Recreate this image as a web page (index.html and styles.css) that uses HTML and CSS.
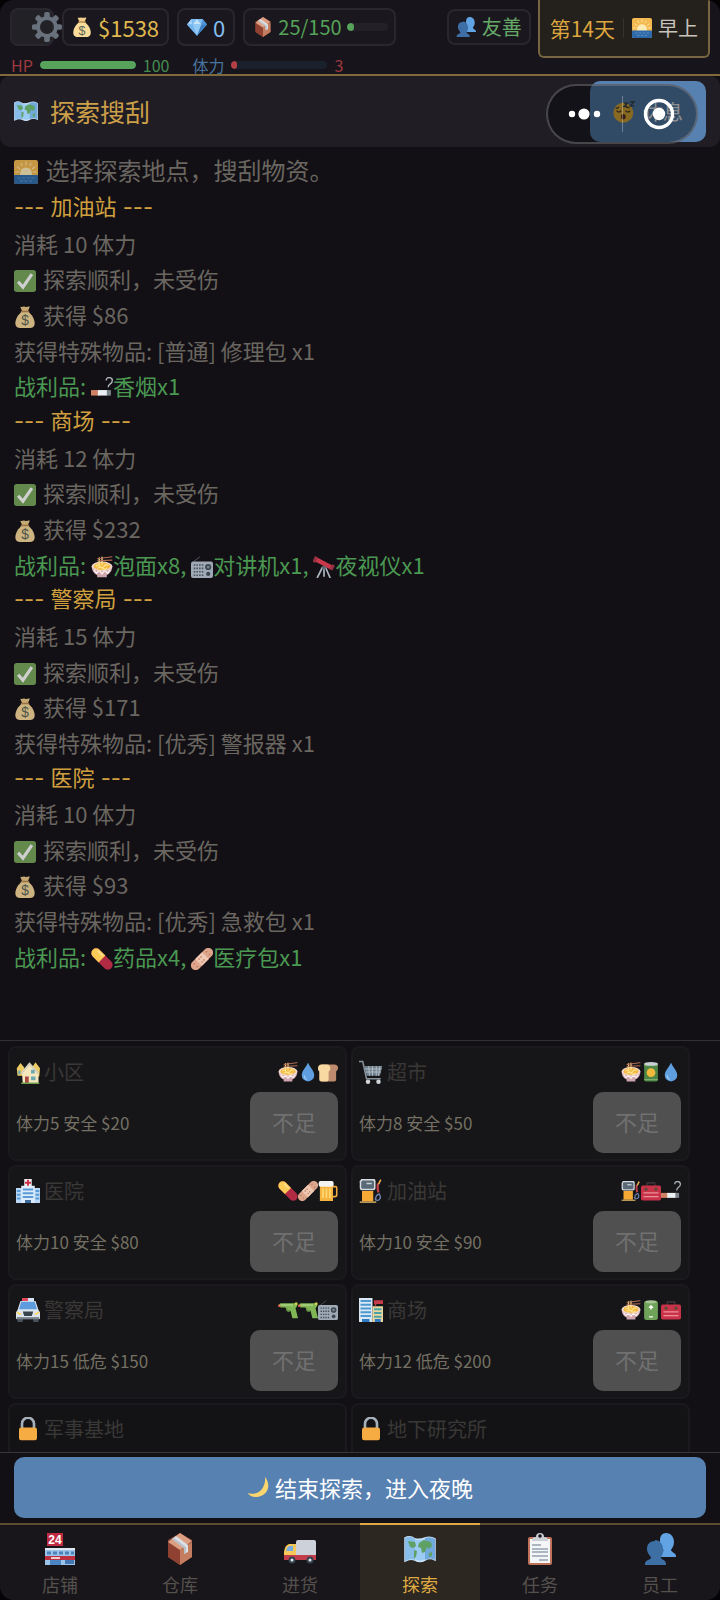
FILE: index.html
```html
<!DOCTYPE html>
<html lang="zh-CN">
<head>
    <meta charset="UTF-8">
    <meta name="viewport" content="width=device-width, initial-scale=1.0">
    <title>探索搜刮</title>
    <link rel="stylesheet" href="styles.css">
</head>
<body>

    <!-- 图标库 -->
    <svg class="sprite" aria-hidden="true">
        <symbol id="gear" viewBox="0 0 32 32">
            <g fill="#68717c">
                <g id="teeth"><rect x="13" y="0" width="6" height="7" rx="2"/><rect x="13" y="25" width="6" height="7" rx="2"/><rect x="0" y="13" width="7" height="6" rx="2"/><rect x="25" y="13" width="7" height="6" rx="2"/></g>
                <use href="#teeth" transform="rotate(45 16 16)"/>
            </g>
            <circle cx="16" cy="16" r="9.5" fill="none" stroke="#68717c" stroke-width="4"/>
        </symbol>
        <symbol id="money" viewBox="0 0 32 32">
            <path d="M9 1c3 1 4-1 7 0s4-1 7 0l-3 7h-8z" fill="#f3cf8b"/>
            <path d="M12 8h8c6 4 10 11 10 17 0 5-3 7-8 7H10c-5 0-8-2-8-7C2 19 6 12 12 8z" fill="#fbdc9a"/>
            <path d="M11 8h10" stroke="#b98a50" stroke-width="2.4" stroke-linecap="round"/>
            <text x="16" y="28" text-anchor="middle" font-family="Liberation Sans" font-size="20" fill="#5c6657">$</text>
        </symbol>
        <symbol id="gem" viewBox="0 0 32 32">
            <path d="M7 3h18l7 9-16 18L0 12z" fill="#5fa5e6"/>
            <path d="M7 3 0 12h9z" fill="#a8d5f8"/><path d="M7 3h9l-7 9z" fill="#7fbdf2"/><path d="M16 3 9 12h14z" fill="#c5e5fc"/><path d="M16 3h9l-2 9z" fill="#7fbdf2"/><path d="M25 3l7 9h-9z" fill="#4f93d6"/>
            <path d="M0 12h9l7 18z" fill="#75b5ee"/><path d="M9 12h14l-7 18z" fill="#94cbf6"/><path d="M23 12h9L16 30z" fill="#3f7fc4"/>
        </symbol>
        <symbol id="box" viewBox="0 0 32 32">
            <path d="M16 0l12 7v17l-12 8-12-8V7z" fill="#8c4636"/>
            <path d="M4 9l12 8v15L4 24z" fill="#8f4231"/><path d="M16 17l12-8v15l-12 8z" fill="#c57d60"/>
            <path d="M16 0l12 8-12 9L4 9z" fill="#dc9f82"/>
            <path d="M8 6l4-3 12 9v7l-4 2v-6z" fill="#dce1e5"/><path d="M8 6l2-1 12 9v6l-2 1v-6z" fill="#b9c0c7"/>
        </symbol>
        <symbol id="people" viewBox="0 0 32 32">
            <path d="M22 0c5 0 8 4 8 9 0 4-2 6-3 8 0 2 5 3 5 6v1H16V7c0-4 2-7 6-7z" fill="#62a3e3"/>
            <path d="M11 7c5 0 8 4 8 9l1 1-1 2c0 3-2 4-2 6 1 2 5 2 5 6v1H1v-1c0-4 5-4 6-6 0-2-4-4-4-9s3-8 8-8z" fill="#3d6fa5"/>
        </symbol>
        <symbol id="sunrise" viewBox="0 0 32 32">
            <rect width="32" height="32" rx="3" fill="#f4b94f"/>
            <g stroke="#fbe7a8" stroke-width="1.5"><path d="M16 2v5M9 4l2 4M23 4l-2 4M4 9l4 3M28 9l-4 3M2 16h5M30 16h-5"/></g>
            <circle cx="16" cy="18" r="8" fill="#fdebb6"/>
            <path d="M0 20h32v9a3 3 0 0 1-3 3H3a3 3 0 0 1-3-3z" fill="#2f6aa8"/>
            <path d="M5 24h22M8 28h16" stroke="#5b91c4" stroke-width="1.5" stroke-dasharray="4 2"/>
        </symbol>
        <symbol id="map" viewBox="0 0 32 32">
            <path d="M1 5q5-3 10 1 5 1 10-1 5-2 10 1v21q-5-3-10 0-5 3-10 0-5-2-10 1z" fill="#9bcbf2" stroke="#c8e2f8" stroke-width="1.5"/>
            <path d="M11 6v21q-5-2-10 1V5q5-3 10 1z" fill="#88bdea"/><path d="M21 5q5-2 10 1v21q-5-3-10 0z" fill="#72a9dc"/>
            <path d="M4 8l7 1 1 4-3 2-3-1zM10 17l3 1-1 6-2 1zM15 10l5-3 7 2 1 4-3 3-2-2-2 5-3 1-1-5-3-1zM25 20l3-1v4l-3 1z" fill="#5fa065"/>
        </symbol>
        <symbol id="sleepy" viewBox="0 0 32 32">
            <circle cx="15" cy="17" r="14.5" fill="#f3ba35"/>
            <path d="M5 14q4 4 7 0M18 14q4 4 7 0M4 11l5-2M24 10l-5-1" stroke="#5b4624" stroke-width="2" fill="none"/>
            <ellipse cx="15" cy="23" rx="3.5" ry="4" fill="#66351f"/>
            <path d="M16 3h5l-5 5h5M25 1h6l-6 6h6" stroke="#37474f" stroke-width="2" fill="none"/>
        </symbol>
        <symbol id="check" viewBox="0 0 32 32">
            <rect width="32" height="32" rx="4" fill="#78a85a"/>
            <path d="M6 17l7 8L26 6" fill="none" stroke="#fff" stroke-width="4.5"/>
        </symbol>
        <symbol id="cig" viewBox="0 0 32 32">
            <path d="M0 19h12v8H0z" fill="#cf8264"/><path d="M10 19h14v8H10z" fill="#eceff1"/><path d="M23 19h6v8h-6z" fill="#7a828a"/>
            <path d="M22 5c0-6 9-5 9 0 0 6-6 4-6 10" fill="none" stroke="#aeb6bd" stroke-width="2"/>
        </symbol>
        <symbol id="noodle" viewBox="0 0 32 32">
            <path d="M1 15h30c0 7-4 11-8 13v3H9v-3c-4-2-8-6-8-13z" fill="#cfa6ad"/>
            <path d="M4 20l4 5 4-4 4 5 4-5 4 4 4-5" stroke="#fff0ee" stroke-width="2" fill="none"/>
            <ellipse cx="16" cy="15" rx="15" ry="7" fill="#f1d8cf"/><ellipse cx="16" cy="15" rx="12" ry="5.5" fill="#f4b840"/>
            <path d="M7 15q3-4 6 0t6 0 6-1M9 18q4-3 8 0t6-1M12 2v13M16 1v12" stroke="#ffe28a" stroke-width="2" fill="none"/>
            <path d="M9 4l22-3M9 7l22-1" stroke="#b26b54" stroke-width="1.6"/>
        </symbol>
        <symbol id="radio" viewBox="0 0 32 32">
            <path d="M3 9l10-8" stroke="#454c52" stroke-width="1.5"/>
            <rect y="8" width="32" height="24" rx="3" fill="#9fa8b5"/>
            <path d="M4 13h14M4 18h14M4 23h14M4 28h14" stroke="#46505a" stroke-width="2.2" stroke-dasharray="2.2 1.7"/>
            <circle cx="25" cy="16" r="4.5" fill="#3e474f"/><circle cx="25" cy="16" r="2" fill="#7c8690"/><circle cx="25" cy="26" r="3" fill="#3e474f"/>
        </symbol>
        <symbol id="scope" viewBox="0 0 32 32">
            <path d="M14 16L6 32M16 16v14M18 16l7 16" stroke="#a9b4bd" stroke-width="2.5"/>
            <path d="M4 1l25 13-3 6L1 7z" fill="#c9384a"/><path d="M3 0l4 2-4 8-4-2zM28 12l4 2-4 7-4-2z" fill="#953142"/>
            <circle cx="16" cy="17" r="3" fill="#5e6971"/>
        </symbol>
        <symbol id="pill" viewBox="0 0 32 32">
            <g transform="rotate(45 16 16)"><rect x="-3" y="9" width="38" height="14" rx="7" fill="#b12b45"/><path d="M16 9H4a7 7 0 0 0 0 14h12z" fill="#fbcb58"/><path d="M3 12h11" stroke="#ffe49a" stroke-width="2"/></g>
        </symbol>
        <symbol id="bandage" viewBox="0 0 32 32">
            <g transform="rotate(-45 16 16)"><rect x="-4" y="9" width="40" height="14" rx="7" fill="#dca58c"/><rect x="9" y="9" width="14" height="14" fill="#f0c9b4"/><path d="M2 13h3M2 19h3M27 13h3M27 19h3M12 13h8M12 19h8" stroke="#b9785f" stroke-width="2" stroke-dasharray="2 2"/></g>
        </symbol>
        <symbol id="houses" viewBox="0 0 32 32">
            <path d="M1 11l5-7 5 6v11H2zM22 9l4-6 6 8-1 11h-9z" fill="#eccb62"/>
            <path d="M8 17L18 6l12 11v14H9z" fill="#f5e8bd"/><path d="M7 18L18 5l12 13" stroke="#d7d0ba" stroke-width="2.5" fill="none"/>
            <path d="M3 14h3v5H3zM20 13h5v5h-5zM20 22h6v5h-6z" fill="#6fa9b2"/><path d="M12 22h5v9h-5z" fill="#a94a42"/><path d="M7 31h24" stroke="#6f9e51" stroke-width="2"/>
        </symbol>
        <symbol id="drop" viewBox="0 0 32 32">
            <path d="M16 1c3 7 10 13 10 20a10 10 0 0 1-20 0C6 14 13 8 16 1z" fill="#5f9fe0"/><path d="M10 21c0 4 2 6 4 7" stroke="#9bc8f2" stroke-width="2" fill="none"/>
        </symbol>
        <symbol id="bread" viewBox="0 0 32 32">
            <path d="M6 4h20c8 0 7 9 3 11v13q0 3-3 3H6z" fill="#bf8c70"/><path d="M5 4h9c7 0 7 9 3 11v13q0 3-3 3H5q-3 0-3-3V15C-2 12 0 4 5 4z" fill="#f8d9a2"/>
        </symbol>
        <symbol id="cart" viewBox="0 0 32 32">
            <path d="M0 2h5l5 23h19" fill="none" stroke="#87929b" stroke-width="2"/><path d="M7 8h24l-3 13H10z" fill="#6f808c"/>
            <path d="M8 12h22M9 16h20M13 8l1 13M18 8v13M23 8v13M28 8l-2 13" stroke="#b5c0c8" stroke-width="1.2"/>
            <circle cx="12" cy="29" r="3" fill="#d0d5d9"/><circle cx="26" cy="29" r="3" fill="#d0d5d9"/>
        </symbol>
        <symbol id="can" viewBox="0 0 32 32">
            <rect x="5" y="2" width="22" height="29" rx="3" fill="#4d8646"/><path d="M5 5h22M5 28h22" stroke="#7dad67" stroke-width="2"/><ellipse cx="16" cy="3" rx="11" ry="3" fill="#c9d0d4"/><circle cx="16" cy="17" r="7" fill="#f2b93c"/>
        </symbol>
        <symbol id="hospital" viewBox="0 0 32 32">
            <path d="M0 12h9v20H0zM23 12h9v20h-9z" fill="#b9d8f5"/><path d="M7 9h18v23H7z" fill="#dcecfb"/><rect x="11" y="0" width="10" height="10" fill="#eceff1"/>
            <path d="M16 1v8M12 5h8" stroke="#d2304b" stroke-width="2.5"/><path d="M1 16h5M9 14h14M26 16h5M1 21h5M9 19h14M26 21h5M1 26h5M9 24h14M26 26h5" stroke="#5a9ad6" stroke-width="2.6"/><path d="M12 28h8v4h-8z" fill="#3c6a9a"/>
        </symbol>
        <symbol id="beer" viewBox="0 0 32 32">
            <path d="M22 9h6q2 0 2 2v11q0 3-3 3h-5" fill="none" stroke="#f0aa3d" stroke-width="2.5"/><path d="M3 7h21v25H3z" fill="#f6b33f"/><path d="M8 12v15M13.5 12v15M19 12v15" stroke="#ffdc78" stroke-width="2.5"/><rect x="1" y="0" width="24" height="9" rx="3" fill="#f3f3f1"/>
        </symbol>
        <symbol id="pump" viewBox="0 0 32 32">
            <path d="M3 0h17q2 0 2 3v9q0 3-3 3H4q-3 0-3-3V3z" fill="#d5dbe0"/><rect x="3" y="2" width="17" height="11" rx="2" fill="#596976"/><path d="M10 6h7" stroke="#c8d0d6" stroke-width="2"/><path d="M4 16h15v14H4z" fill="#f6a935"/><path d="M1 31h22" stroke="#b99959" stroke-width="2.5"/>
            <path d="M25 6v8l1 4" fill="none" stroke="#c44048" stroke-width="3"/><path d="M21 26c4 6 10 0 6-6-4 1-6 5-4 9M29 1l-3 6" fill="none" stroke="#7084b7" stroke-width="1.8"/><path d="M29 1l-3 6" stroke="#f6a935" stroke-width="2"/>
        </symbol>
        <symbol id="toolbox" viewBox="0 0 32 32">
            <path d="M10 8V3h12v5" fill="none" stroke="#3b3034" stroke-width="2.5"/><rect y="7" width="32" height="24" rx="3" fill="#c9334a"/><path d="M4 19h24M4 25h24" stroke="#ee9099" stroke-width="2"/><circle cx="8" cy="13" r="2.5" fill="#5f4a35"/><circle cx="24" cy="13" r="2.5" fill="#5f4a35"/>
        </symbol>
        <symbol id="police" viewBox="0 0 32 32">
            <path d="M8 0h8v4H8z" fill="#e2485a"/><path d="M16 0h8v4h-8z" fill="#d4e4f5"/><path d="M2 27h7v5H2zM23 27h7v5h-7z" fill="#49525a"/><path d="M6 4h20l4 12 2 3v9H0v-9l2-3z" fill="#dce6ee"/><path d="M7 5h18l3 10H4z" fill="#5d9ddf"/><path d="M9 18h14l-2 6H11z" fill="#38434c"/><path d="M1 19l6 3M31 19l-6 3" stroke="#ffd25b" stroke-width="2"/><path d="M1 27h30" stroke="#77828b" stroke-width="3"/>
        </symbol>
        <symbol id="gun" viewBox="0 0 32 32">
            <path d="M1 8l3-3h24l3 4-3 4 4 16H23l-3-12h-6l-2-5H4z" fill="#7fb554"/><path d="M4 8h20" stroke="#b3d888" stroke-width="2"/><circle cx="2" cy="9" r="2" fill="#e8664b"/><circle cx="29" cy="6" r="2.5" fill="#c8d44d"/><path d="M14 13q-1 6 5 5" fill="none" stroke="#618c42" stroke-width="2"/>
        </symbol>
        <symbol id="mall" viewBox="0 0 32 32">
            <path d="M0 0h18v32H0z" fill="#d9e8f4"/><path d="M2 4h14M2 9h14M2 14h14M2 19h14M2 24h14" stroke="#4e9ad0" stroke-width="2.4"/><path d="M18 11h14v21H18z" fill="#e8d8a0"/><path d="M20 15h10M20 20h10M20 25h10" stroke="#4ca3a6" stroke-width="2.4"/><rect x="20" y="3" width="12" height="5" fill="#c53d4b"/><path d="M22 8v3" stroke="#a44" stroke-width="2"/><path d="M4 28h10v4H4zM21 28h8v4h-8z" fill="#2e7bc4"/>
        </symbol>
        <symbol id="battery" viewBox="0 0 32 32">
            <rect x="5" y="1" width="22" height="31" rx="4" fill="#6fa35a"/><ellipse cx="16" cy="3" rx="9" ry="2.5" fill="#a6c795"/><path d="M16 8v7M12.5 11.5h7M13 27h6" stroke="#fff" stroke-width="2.3"/>
        </symbol>
        <symbol id="lock" viewBox="0 0 32 32">
            <path d="M8 15V9a8 8 0 0 1 16 0v6" fill="none" stroke="#a6b0bb" stroke-width="3.5"/><rect x="4" y="14" width="24" height="17" rx="3" fill="#f6ac42"/>
        </symbol>
        <symbol id="moon" viewBox="0 0 32 32">
            <path d="M26 1c10 12 4 27-9 29C10 32 4 29 1 25c9 2 18 0 22-8 3-5 4-11 3-16z" fill="#fbd56e"/>
        </symbol>
        <symbol id="store" viewBox="0 0 32 32">
            <path d="M1 15h30v17H1z" fill="#9cc3e8"/><path d="M1 15h30v2H1z" fill="#dde8f1"/><path d="M3 20h27" stroke="#4a83b9" stroke-width="3" stroke-dasharray="4 2"/><path d="M1 23h30v4H1z" fill="#bc3040"/><path d="M7 25h9" stroke="#fff" stroke-width="1.5"/><path d="M6 27h11v5H6z" fill="#4a86c4"/><path d="M21 27h9v4h-9z" fill="#4477b3"/>
            <rect x="3" y="0" width="16" height="13" fill="#bf2942"/><text x="11" y="11" text-anchor="middle" font-family="Liberation Sans" font-weight="bold" font-size="12" fill="#fff">24</text>
        </symbol>
        <symbol id="truck" viewBox="0 0 32 32">
            <path d="M14 7h16q2 0 2 2v15H12V9q0-2 2-2z" fill="#cdd2da"/><path d="M5 11h7v13H0v-5q1-7 5-8z" fill="#fac858"/><path d="M5 13h4v5H2q1-4 3-5z" fill="#78aede"/><path d="M0 22h32v5H0z" fill="#c33c4a"/><circle cx="8" cy="27" r="3.5" fill="#354250"/><circle cx="8" cy="27" r="1.5" fill="#e4e8eb"/><circle cx="26" cy="27" r="3.5" fill="#354250"/><circle cx="26" cy="27" r="1.5" fill="#e4e8eb"/>
        </symbol>
        <symbol id="clipboard" viewBox="0 0 32 32">
            <rect x="4" y="4" width="24" height="28" rx="2" fill="#bf735a"/><path d="M6 6h20v24H6z" fill="#f4f5f6"/><path d="M8 12h9M8 16h16M8 19h16M8 23h16M15 27h9" stroke="#63788d" stroke-width="1.2"/><path d="M8 7q0-3 4-3 0-4 4-4t4 4q4 0 4 3v1H8z" fill="#cbd0d5"/><circle cx="16" cy="3" r="1.8" fill="#18161b"/>
        </symbol>
    </svg>

    <div class="app">
        <header class="topbar">
            <div class="status">
                <div class="chips">
                    <button class="chip gear-btn" aria-label="设置"><svg class="icon"><use href="#gear"/></svg></button>
                    <div class="chip money"><svg class="icon s20"><use href="#money"/></svg>$1538</div>
                    <div class="chip gem"><svg class="icon s20"><use href="#gem"/></svg>0</div>
                    <div class="chip stock"><svg class="icon s20"><use href="#box"/></svg>25/150<span class="bar"><i style="width: 17%"></i></span></div>
                </div>
                <div class="vitals">
                    <span class="red">HP</span><span class="bar hp"><i style="width: 100%"></i></span><span class="green hp-num">100</span>
                    <span class="blue">体力</span><span class="bar sp"><i style="width: 6%"></i></span><span class="red">3</span>
                </div>
            </div>
            <div class="chip mood"><svg class="icon s20"><use href="#people"/></svg>友善</div>
            <div class="day"><span>第14天</span><span class="time"><svg class="icon s20"><use href="#sunrise"/></svg>早上</span></div>
        </header>

        <div class="title-bar">
            <h1><svg class="icon"><use href="#map"/></svg>探索搜刮</h1>
            <button class="rest"><svg class="icon s22"><use href="#sleepy"/></svg>休息</button>
            <!-- 小程序胶囊 -->
            <div class="capsule">
                <button aria-label="更多"><svg viewBox="0 0 44 32"><circle cx="9" cy="16" r="3.2"/><circle cx="21" cy="16" r="5.6"/><circle cx="34" cy="16" r="3.2"/></svg></button>
                <button aria-label="关闭"><svg viewBox="0 0 44 32"><circle cx="22" cy="16" r="6.2"/><circle cx="22" cy="16" r="13.5" fill="none" stroke="#fff" stroke-width="3.4"/></svg></button>
            </div>
        </div>

        <main class="log">
            <p class="intro"><svg class="icon gap"><use href="#sunrise"/></svg> 选择探索地点，搜刮物资。</p>
            <div class="lines">
                <p class="place">--- 加油站 ---</p>
                <p>消耗 10 体力</p>
                <p><svg class="icon gap"><use href="#check"/></svg> 探索顺利，未受伤</p>
                <p><svg class="icon gap"><use href="#money"/></svg> 获得 $86</p>
                <p>获得特殊物品: [普通] 修理包 x1</p>
                <p class="loot">战利品: <svg class="icon"><use href="#cig"/></svg>香烟x1</p>
                <p class="place">--- 商场 ---</p>
                <p>消耗 12 体力</p>
                <p><svg class="icon gap"><use href="#check"/></svg> 探索顺利，未受伤</p>
                <p><svg class="icon gap"><use href="#money"/></svg> 获得 $232</p>
                <p class="loot">战利品: <svg class="icon"><use href="#noodle"/></svg>泡面x8, <svg class="icon"><use href="#radio"/></svg>对讲机x1, <svg class="icon"><use href="#scope"/></svg>夜视仪x1</p>
                <p class="place">--- 警察局 ---</p>
                <p>消耗 15 体力</p>
                <p><svg class="icon gap"><use href="#check"/></svg> 探索顺利，未受伤</p>
                <p><svg class="icon gap"><use href="#money"/></svg> 获得 $171</p>
                <p>获得特殊物品: [优秀] 警报器 x1</p>
                <p class="place">--- 医院 ---</p>
                <p>消耗 10 体力</p>
                <p><svg class="icon gap"><use href="#check"/></svg> 探索顺利，未受伤</p>
                <p><svg class="icon gap"><use href="#money"/></svg> 获得 $93</p>
                <p>获得特殊物品: [优秀] 急救包 x1</p>
                <p class="loot">战利品: <svg class="icon"><use href="#pill"/></svg>药品x4, <svg class="icon"><use href="#bandage"/></svg>医疗包x1</p>
            </div>
        </main>

        <section class="places">
            <div class="card">
                <div class="card-top"><h2><svg class="icon"><use href="#houses"/></svg>小区</h2><span class="drops"><svg class="icon"><use href="#noodle"/></svg><svg class="icon"><use href="#drop"/></svg><svg class="icon"><use href="#bread"/></svg></span></div>
                <div class="card-row"><span>体力5 安全 $20</span><button disabled>不足</button></div>
            </div>
            <div class="card">
                <div class="card-top"><h2><svg class="icon"><use href="#cart"/></svg>超市</h2><span class="drops"><svg class="icon"><use href="#noodle"/></svg><svg class="icon"><use href="#can"/></svg><svg class="icon"><use href="#drop"/></svg></span></div>
                <div class="card-row"><span>体力8 安全 $50</span><button disabled>不足</button></div>
            </div>
            <div class="card">
                <div class="card-top"><h2><svg class="icon"><use href="#hospital"/></svg>医院</h2><span class="drops"><svg class="icon"><use href="#pill"/></svg><svg class="icon"><use href="#bandage"/></svg><svg class="icon"><use href="#beer"/></svg></span></div>
                <div class="card-row"><span>体力10 安全 $80</span><button disabled>不足</button></div>
            </div>
            <div class="card">
                <div class="card-top"><h2><svg class="icon"><use href="#pump"/></svg>加油站</h2><span class="drops"><svg class="icon"><use href="#pump"/></svg><svg class="icon"><use href="#toolbox"/></svg><svg class="icon"><use href="#cig"/></svg></span></div>
                <div class="card-row"><span>体力10 安全 $90</span><button disabled>不足</button></div>
            </div>
            <div class="card">
                <div class="card-top"><h2><svg class="icon"><use href="#police"/></svg>警察局</h2><span class="drops"><svg class="icon"><use href="#gun"/></svg><svg class="icon"><use href="#gun"/></svg><svg class="icon"><use href="#radio"/></svg></span></div>
                <div class="card-row"><span>体力15 低危 $150</span><button disabled>不足</button></div>
            </div>
            <div class="card">
                <div class="card-top"><h2><svg class="icon"><use href="#mall"/></svg>商场</h2><span class="drops"><svg class="icon"><use href="#noodle"/></svg><svg class="icon"><use href="#battery"/></svg><svg class="icon"><use href="#toolbox"/></svg></span></div>
                <div class="card-row"><span>体力12 低危 $200</span><button disabled>不足</button></div>
            </div>
            <div class="card locked">
                <div class="card-top"><h2><svg class="icon"><use href="#lock"/></svg>军事基地</h2></div>
            </div>
            <div class="card locked">
                <div class="card-top"><h2><svg class="icon"><use href="#lock"/></svg>地下研究所</h2></div>
            </div>
        </section>

        <div class="action">
            <button><svg class="icon s22"><use href="#moon"/></svg>结束探索，进入夜晚</button>
        </div>

        <nav class="tabs">
            <button><svg class="icon"><use href="#store"/></svg>店铺</button>
            <button><svg class="icon"><use href="#box"/></svg>仓库</button>
            <button><svg class="icon"><use href="#truck"/></svg>进货</button>
            <button class="cur"><svg class="icon"><use href="#map"/></svg>探索</button>
            <button><svg class="icon"><use href="#clipboard"/></svg>任务</button>
            <button><svg class="icon"><use href="#people"/></svg>员工</button>
        </nav>
    </div>

</body>
</html>
```
FILE: styles.css
```css
*{
    margin: 0;
    padding: 0;
    box-sizing: border-box;
}
body{
    background: #040406;
    color: #6a6660;
    font-family: "Noto Sans CJK SC", "Noto Sans", sans-serif;
}
button{
    font: inherit;
    color: inherit;
    border: none;
    background: none;
}
h1, h2{
    font-weight: normal;
}
.sprite{
    display: none;
}
.icon{
    width: 24px;
    height: 24px;
    flex-shrink: 0;
}
.icon.s20{
    width: 20px;
    height: 20px;
}
.icon.s22{
    width: 22px;
    height: 22px;
}
.red{ color: #a0393f; }
.green{ color: #468a4e; }
.blue{ color: #47739e; }

.app{
    display: flex;
    flex-direction: column;
    height: 100vh;
    background: #121015;
    border-radius: 14px;
    overflow: hidden;
}

/* 顶部状态栏 */
.topbar{
    display: flex;
    align-items: flex-start;
    padding: 0 10px;
    background: #17151b;
    border-bottom: 2px solid #80693a;
}
.status{
    flex: 1;
    padding-top: 8px;
}
.chips{
    display: flex;
    gap: 8px;
}
.chip{
    display: flex;
    align-items: center;
    gap: 6px;
    height: 38px;
    padding: 0 8px;
    background: #1a181e;
    border: 2px solid #29272d;
    border-radius: 8px;
    font-size: 20px;
    line-height: 28px;
}
.gear-btn{
    width: 44px;
    padding: 0 0 0 20px;
    background: #222126;
}
.gear-btn .icon{
    width: 30px;
    height: 30px;
}
.money{
    color: #dfb74e;
    font-size: 22px;
}
.gem{
    color: #84bdf0;
    font-size: 22px;
}
.stock{
    color: #56a35a;
    padding: 0 6px 0 8px;
    gap: 5px;
}
.bar{
    display: block;
    width: 96px;
    height: 8px;
    border-radius: 4px;
    background: #1a212c;
    overflow: hidden;
}
.bar i{
    display: block;
    height: 100%;
    border-radius: 4px;
    background: #57a35b;
}
.stock .bar{
    width: 41px;
    background: #232127;
}
.bar.sp i{
    background: #b63f45;
}
.vitals{
    display: flex;
    align-items: center;
    gap: 7px;
    height: 18px;
    margin-top: 10px;
    padding-left: 1px;
    font-size: 16px;
    line-height: 18px;
}
.hp-num{
    margin-right: 16px;
}
.mood{
    height: 36px;
    margin: 9px 7px 0 0;
    padding: 0 7px;
    color: #65a967;
}
.day{
    display: flex;
    align-items: center;
    height: 58px;
    padding: 0 10px;
    background: #24201c;
    border: 2px solid #786541;
    border-top: none;
    border-radius: 0 0 6px 6px;
    color: #dda63f;
    font-size: 21px;
}
.time{
    display: flex;
    align-items: center;
    gap: 6px;
    margin-left: 8px;
    padding-left: 8px;
    border-left: 1px solid #37322d;
    font-size: 20px;
    line-height: 18px;
    color: #c8c3bb;
}

/* 标题 */
.title-bar{
    position: relative;
    display: flex;
    align-items: center;
    justify-content: space-between;
    padding: 5px 14px;
    background: #201d24;
    border-radius: 10px;
}
.title-bar h1{
    display: flex;
    align-items: center;
    gap: 12px;
    color: #cc9f49;
    font-size: 25px;
    line-height: 36px;
    padding-bottom: 2px;
}
.rest{
    display: flex;
    align-items: center;
    justify-content: center;
    gap: 8px;
    width: 116px;
    height: 61px;
    background: #5781b1;
    border-radius: 10px;
    color: #fff;
    font-size: 20px;
}
.capsule{
    position: absolute;
    top: 8px;
    right: 22px;
    display: flex;
    width: 152px;
    height: 60px;
    background: rgba(5, 6, 10, .45);
    border: 2px solid rgba(150, 150, 150, .4);
    border-radius: 30px;
}
.capsule button{
    flex: 1;
    display: flex;
    align-items: center;
    justify-content: center;
}
.capsule svg{
    width: 44px;
    height: 32px;
    fill: #fff;
}
.capsule::before{
    content: "";
    position: absolute;
    left: 50%;
    top: 10px;
    bottom: 10px;
    width: 1px;
    background: rgba(255, 255, 255, .3);
}

/* 探索日志 */
.log{
    flex: 1;
    display: flex;
    flex-direction: column;
    padding: 6px 14px 67px;
    font-size: 22px;
    line-height: 34px;
}
.log .icon{
    width: 22px;
    height: 22px;
    vertical-align: -4px;
    opacity: .8;
}
.log .icon.gap{
    margin-right: 2px;
}
.log .intro{
    margin-bottom: 3px;
    font-size: 24px;
}
.log .intro .icon{
    width: 24px;
    height: 24px;
}
.lines{
    flex: 1;
    display: flex;
    flex-direction: column;
    justify-content: space-between;
}
.log .place{
    color: #d0a03f;
    font-family: Inter, "Noto Sans CJK SC", sans-serif;
}
.log .loot{
    color: #4a9852;
}
.log .loot .icon{
    opacity: 1;
}

/* 地点列表，超出部分滚动 */
.places{
    display: grid;
    grid-template-columns: 1fr 1fr;
    grid-auto-rows: 115px;
    gap: 4px;
    height: 412px;
    padding: 5px 30px 0 8px;
    border-top: 1px solid #322f33;
    overflow: hidden;
}
.card{
    padding: 10px 7px 5px 6px;
    background: #161618;
    border: 2px solid #1a191d;
    border-radius: 8px;
}
.card.locked{
    background: #131315;
}
.card-top{
    display: flex;
    align-items: center;
    justify-content: space-between;
    height: 28px;
}
.card h2{
    display: flex;
    align-items: center;
    gap: 4px;
    color: #3a3836;
    font-size: 20px;
    line-height: 28px;
}
.drops{
    display: flex;
}
.drops .icon{
    width: 20px;
    height: 20px;
}
.card-row{
    display: flex;
    align-items: center;
    justify-content: space-between;
    margin-top: 6px;
    color: #747063;
    font-size: 17px;
}
.card-row button{
    width: 88px;
    height: 61px;
    padding-bottom: 3px;
    background: #505050;
    border-radius: 10px;
    color: #707070;
    font-size: 22px;
}

/* 底部 */
.action{
    padding: 4px 14px 5px;
    border-top: 1px solid #38363a;
}
.action button{
    display: flex;
    align-items: center;
    justify-content: center;
    gap: 6px;
    width: 100%;
    height: 61px;
    padding-bottom: 2px;
    background: #5781b1;
    border-radius: 10px;
    color: #fff;
    font-size: 22px;
}
.tabs{
    display: flex;
    background: #18161b;
}
.tabs button{
    flex: 1;
    display: flex;
    flex-direction: column;
    align-items: center;
    gap: 6px;
    height: 77px;
    padding-top: 8px;
    border-top: 2px solid #5c4d2f;
    color: #54504c;
    font-size: 18px;
    line-height: 26px;
}
.tabs .icon{
    width: 32px;
    height: 32px;
}
.tabs .cur{
    background: #2c2720;
    border-top-color: #dfaa44;
    color: #dfaa44;
}
```
